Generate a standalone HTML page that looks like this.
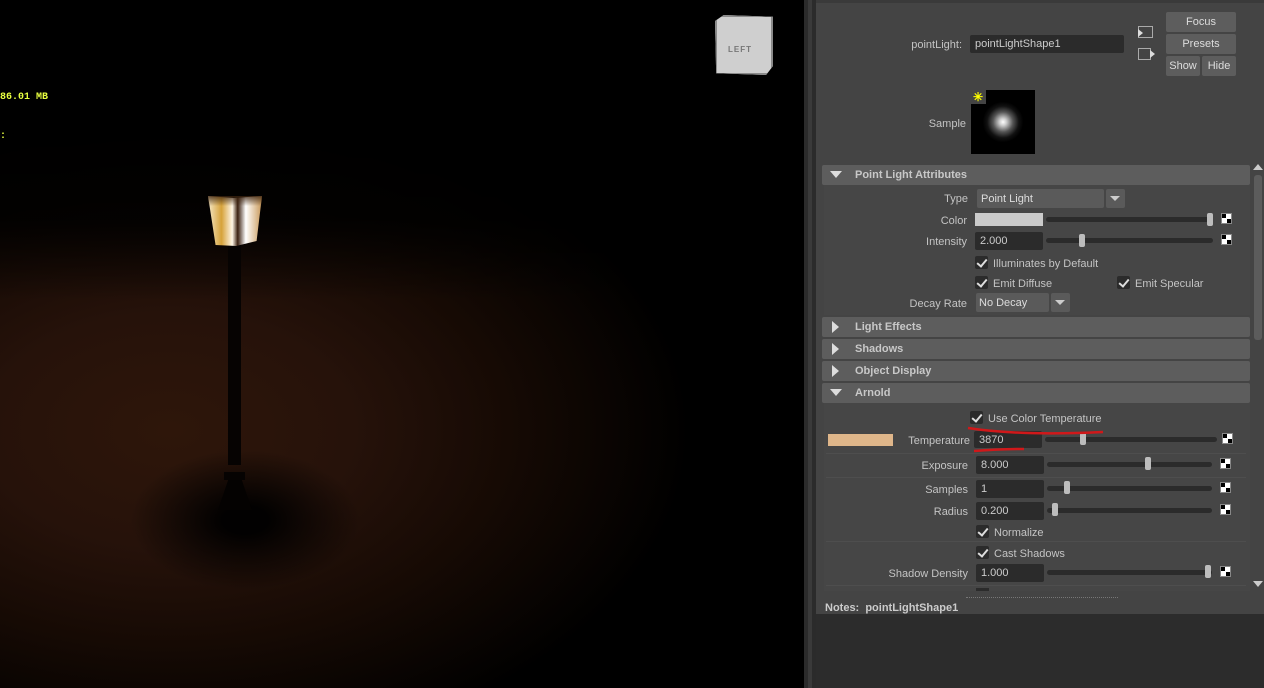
<!DOCTYPE html>
<html><head><meta charset="utf-8"><style>
*{margin:0;padding:0;box-sizing:border-box}
html,body{width:1264px;height:688px;overflow:hidden}
body{background:#000;font-family:"Liberation Sans",sans-serif;font-size:11px;color:#c4c4c4;position:relative}
.a{position:absolute}
.lbl{position:absolute;text-align:right;white-space:nowrap}
.fld{position:absolute;background:#2b2b2b;border-radius:2px;padding-left:5px;line-height:19px;color:#ccc}
.trk{position:absolute;height:5px;background:#2b2b2b;border-radius:3px}
.th{position:absolute;width:6px;height:13px;background:#bdbdbd;border-radius:2px}
.ck{position:absolute;width:11px;height:11px;background:#fff;border:1px solid #888}
.ck:before,.ck:after{content:"";position:absolute;width:4px;height:4px;background:#000}
.ck:before{left:0;top:0}.ck:after{right:0;bottom:0}
.cb{position:absolute;width:13px;height:13px;background:#2b2b2b;border-radius:2px}
.cb:after{content:"";position:absolute;left:4px;top:1px;width:4px;height:8px;border:solid #ddd;border-width:0 2px 2px 0;transform:rotate(40deg)}
.hd{position:absolute;left:822px;width:428px;height:20px;background:#5d5d5d;border-radius:2px;font-weight:bold;color:#c8c8c8;line-height:21px;padding-left:33px}
.tri-d{position:absolute;left:8px;top:6px;border-left:6px solid transparent;border-right:6px solid transparent;border-top:7px solid #ddd}
.tri-r{position:absolute;left:10px;top:4px;border-top:6px solid transparent;border-bottom:6px solid transparent;border-left:7px solid #ddd}
.btn{position:absolute;background:#5d5d5d;border-radius:2px;text-align:center;line-height:21px;color:#ddd}
.sep{position:absolute;left:826px;width:420px;height:1px;background:#4e4e4e}
.t{margin-top:1px}
</style></head><body>
<!-- viewport -->
<div class="a" style="left:0;top:0;width:804px;height:688px;background:#000;overflow:hidden">
 <div class="a" style="left:0;top:0;width:804px;height:688px;background:radial-gradient(ellipse 520px 330px at 170px 430px,#2e160a 0%,#26120a 35%,#160a04 65%,#000 100%)"></div>
 <div class="a" style="left:0;top:0;width:804px;height:300px;background:linear-gradient(180deg,#000 0%,#000 80px,rgba(0,0,0,0.85) 220px,rgba(0,0,0,0) 300px)"></div>
 <div class="a" style="left:130px;top:450px;width:230px;height:140px;background:radial-gradient(ellipse closest-side,rgba(0,0,0,0.95) 20%,rgba(0,0,0,0) 100%)"></div>
 <div class="a" style="left:228px;top:240px;width:13px;height:225px;background:#060302"></div>
 <div class="a" style="left:224px;top:472px;width:21px;height:8px;background:#060302"></div>
 <div class="a" style="left:218px;top:480px;width:34px;height:30px;background:#040201;clip-path:polygon(30% 0,70% 0,100% 100%,0 100%)"></div>
 <div class="a" style="left:208px;top:196px;width:54px;height:50px;clip-path:polygon(0 0,48% 4%,100% 0,90% 90%,52% 100%,14% 98%);background:linear-gradient(90deg,#f5e8c8 0%,#d6a23a 25%,#fff6e6 45%,#3a2010 55%,#fff 70%,#c89858 100%)"></div>
 <div class="a" style="left:208px;top:196px;width:54px;height:10px;background:linear-gradient(180deg,rgba(60,35,15,.8),rgba(60,35,15,0))"></div>
 <div class="a" style="left:0;top:92px;color:#e8ff40;font-family:'Liberation Mono',monospace;font-size:10px;font-weight:bold">86.01 MB</div>
 <div class="a" style="left:0;top:131px;color:#e8ff40;font-family:'Liberation Mono',monospace;font-size:10px;font-weight:bold">:</div>
 <div class="a" style="left:715px;top:15px;width:58px;height:60px;background:#cfcfcf;border:2px solid #8a8a8a;clip-path:polygon(0 10%,15% 0,100% 3%,100% 85%,88% 100%,2% 97%)"></div>
 <div class="a" style="left:728px;top:45px;font-size:8px;color:#777;font-weight:bold;letter-spacing:1px">LEFT</div>
</div>
<!-- panel -->
<div class="a" style="left:804px;top:0;width:12px;height:688px;background:#2b2b2b"></div>
<div class="a" style="left:808px;top:0;width:4px;height:688px;background:#3a3a3a"></div>
<div class="a" style="left:816px;top:0;width:448px;height:614px;background:#444"></div>
<div class="a" style="left:816px;top:0;width:448px;height:3px;background:#3a3a3a"></div>
<div class="a" style="left:816px;top:614px;width:448px;height:74px;background:#2c2c2c"></div>

<div class="lbl" style="left:880px;width:82px;top:39px">pointLight:</div>
<div class="fld" style="left:970px;top:35px;width:154px;height:18px">pointLightShape1</div>
<div class="a" style="left:1138px;top:26px;width:15px;height:12px;border:1.5px solid #aaa"></div>
<div class="a" style="left:1138px;top:29px;border-top:4px solid transparent;border-bottom:4px solid transparent;border-left:5px solid #ddd"></div>
<div class="a" style="left:1138px;top:48px;width:13px;height:12px;border:1.5px solid #aaa"></div>
<div class="a" style="left:1150px;top:50px;border-top:4px solid transparent;border-bottom:4px solid transparent;border-left:5px solid #ddd"></div>
<div class="btn" style="left:1166px;top:12px;width:70px;height:20px">Focus</div>
<div class="btn" style="left:1166px;top:34px;width:70px;height:20px">Presets</div>
<div class="btn" style="left:1166px;top:56px;width:34px;height:20px">Show</div>
<div class="btn" style="left:1202px;top:56px;width:34px;height:20px">Hide</div>

<div class="lbl" style="left:900px;width:66px;top:118px">Sample</div>
<div class="a" style="left:971px;top:90px;width:64px;height:64px;background:radial-gradient(circle at 50% 50%,#fff 0,#ccc 8%,#555 22%,#111 35%,#000 45%)"></div>
<div class="a" style="left:971px;top:90px;width:15px;height:14px;background:#444"></div>
<div class="a" style="left:973px;top:91px;color:#ff0;font-size:12px;font-weight:bold;line-height:12px">✳</div>

<!-- scrollbar -->
<div class="a" style="left:1253px;top:163px;width:10px;height:428px;background:#444"></div>
<div class="a" style="left:1253px;top:164px;border-left:5px solid transparent;border-right:5px solid transparent;border-bottom:6px solid #ccc"></div>
<div class="a" style="left:1254px;top:175px;width:8px;height:165px;background:#5c5c5c;border-radius:3px"></div>
<div class="a" style="left:1253px;top:581px;border-left:5px solid transparent;border-right:5px solid transparent;border-top:6px solid #ccc"></div>

<div class="hd" style="top:165px"><span class="tri-d"></span>Point Light Attributes</div>
<div class="a" style="left:824px;top:185px;width:426px;height:130px;background:#464646"></div>

<div class="lbl" style="left:900px;width:68px;top:193px">Type</div>
<div class="a" style="left:977px;top:189px;width:127px;height:19px;background:#5a5a5a;border-radius:2px;padding-left:4px;line-height:20px;color:#ddd">Point Light</div>
<div class="a" style="left:1106px;top:189px;width:19px;height:19px;background:#5a5a5a;border-radius:2px"></div>
<div class="a" style="left:1110px;top:196px;border-left:5px solid transparent;border-right:5px solid transparent;border-top:5px solid #ccc"></div>

<div class="lbl" style="left:900px;width:67px;top:215px">Color</div>
<div class="a" style="left:975px;top:213px;width:68px;height:13px;background:#cbcbcb"></div>
<div class="trk" style="left:1046px;top:217px;width:167px"></div><div class="th" style="left:1207px;top:213px"></div>
<div class="ck" style="left:1221px;top:213px"></div>

<div class="lbl" style="left:900px;width:67px;top:236px">Intensity</div>
<div class="fld" style="left:975px;top:232px;width:68px;height:18px">2.000</div>
<div class="trk" style="left:1046px;top:238px;width:167px"></div><div class="th" style="left:1079px;top:234px"></div>
<div class="ck" style="left:1221px;top:234px"></div>

<div class="cb" style="left:975px;top:256px"></div><div class="a" style="left:993px;top:258px">Illuminates by Default</div>
<div class="cb" style="left:975px;top:276px"></div><div class="a" style="left:993px;top:278px">Emit Diffuse</div>
<div class="cb" style="left:1117px;top:276px"></div><div class="a" style="left:1135px;top:278px">Emit Specular</div>

<div class="lbl" style="left:880px;width:87px;top:298px">Decay Rate</div>
<div class="a" style="left:976px;top:293px;width:73px;height:19px;background:#5a5a5a;border-radius:2px;padding-left:3px;line-height:21px;color:#ddd">No Decay</div>
<div class="a" style="left:1051px;top:293px;width:19px;height:19px;background:#5a5a5a;border-radius:2px"></div>
<div class="a" style="left:1055px;top:300px;border-left:5px solid transparent;border-right:5px solid transparent;border-top:5px solid #ccc"></div>

<div class="hd" style="top:317px"><span class="tri-r"></span>Light Effects</div>
<div class="hd" style="top:339px"><span class="tri-r"></span>Shadows</div>
<div class="hd" style="top:361px"><span class="tri-r"></span>Object Display</div>
<div class="hd" style="top:383px"><span class="tri-d"></span>Arnold</div>
<div class="a" style="left:824px;top:403px;width:426px;height:188px;background:#464646"></div>

<div class="cb" style="left:970px;top:411px"></div><div class="a" style="left:988px;top:413px">Use Color Temperature</div>
<div class="a" style="left:828px;top:434px;width:65px;height:12px;background:#dfb68a"></div>
<div class="lbl" style="left:890px;width:80px;top:435px">Temperature</div>
<div class="fld" style="left:974px;top:431px;width:68px;height:17px;line-height:18px">3870</div>
<div class="trk" style="left:1045px;top:437px;width:172px"></div><div class="th" style="left:1080px;top:432px"></div>
<div class="ck" style="left:1222px;top:433px"></div>
<svg class="a" style="left:960px;top:422px" width="150" height="34"><path d="M8 6 Q60 14 143 10" stroke="#d0181a" stroke-width="2.5" fill="none"/><path d="M14 29 Q40 27 64 27" stroke="#d0181a" stroke-width="2.5" fill="none"/></svg>
<div class="sep" style="top:453px"></div>

<div class="lbl" style="left:880px;width:88px;top:460px">Exposure</div>
<div class="fld" style="left:976px;top:456px;width:68px;height:18px">8.000</div>
<div class="trk" style="left:1047px;top:462px;width:165px"></div><div class="th" style="left:1145px;top:457px"></div>
<div class="ck" style="left:1220px;top:458px"></div>
<div class="sep" style="top:477px"></div>

<div class="lbl" style="left:880px;width:88px;top:484px">Samples</div>
<div class="fld" style="left:976px;top:480px;width:68px;height:18px">1</div>
<div class="trk" style="left:1047px;top:486px;width:165px"></div><div class="th" style="left:1064px;top:481px"></div>
<div class="ck" style="left:1220px;top:482px"></div>

<div class="lbl" style="left:880px;width:88px;top:506px">Radius</div>
<div class="fld" style="left:976px;top:502px;width:68px;height:18px">0.200</div>
<div class="trk" style="left:1047px;top:508px;width:165px"></div><div class="th" style="left:1052px;top:503px"></div>
<div class="ck" style="left:1220px;top:504px"></div>

<div class="cb" style="left:976px;top:525px"></div><div class="a" style="left:994px;top:527px">Normalize</div>
<div class="sep" style="top:541px"></div>
<div class="cb" style="left:976px;top:546px"></div><div class="a" style="left:994px;top:548px">Cast Shadows</div>

<div class="lbl" style="left:860px;width:108px;top:568px">Shadow Density</div>
<div class="fld" style="left:976px;top:564px;width:68px;height:18px">1.000</div>
<div class="trk" style="left:1047px;top:570px;width:165px"></div><div class="th" style="left:1205px;top:565px"></div>
<div class="ck" style="left:1220px;top:566px"></div>
<div class="sep" style="top:585px"></div>
<div class="a" style="left:976px;top:588px;width:13px;height:3px;background:#2b2b2b"></div>

<div class="a" style="left:966px;top:597px;width:152px;border-top:1px dotted #777"></div>
<div class="a" style="left:825px;top:602px;font-weight:bold;color:#ccc">Notes:&nbsp; pointLightShape1</div>
</body></html>
